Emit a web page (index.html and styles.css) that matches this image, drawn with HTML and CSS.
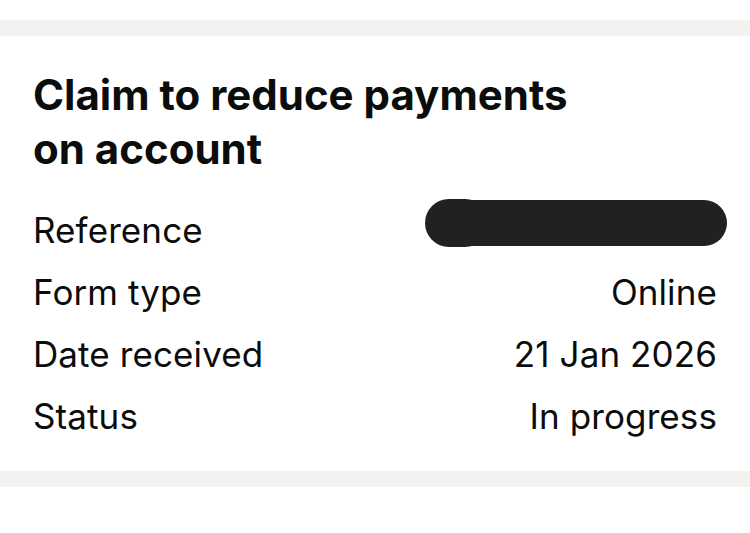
FILE: index.html
```html
<!DOCTYPE html>
<html lang="en">
<head>
<meta charset="utf-8">
<title>Claim to reduce payments on account</title>
<link rel="stylesheet" href="styles.css">
</head>
<body>
<div class="top-gap"></div>
<div class="band"></div>
<section class="card">
  <h1 class="title">Claim to reduce payments<br>on account</h1>
  <dl class="rows">
    <div class="row">
      <dt>Reference</dt>
      <dd><span class="redacted" aria-label="Redacted"></span></dd>
    </div>
    <div class="row">
      <dt>Form type</dt>
      <dd>Online</dd>
    </div>
    <div class="row">
      <dt>Date received</dt>
      <dd>21 Jan 2026</dd>
    </div>
    <div class="row">
      <dt>Status</dt>
      <dd>In progress</dd>
    </div>
  </dl>
</section>
<div class="band"></div>
</body>
</html>
```
FILE: styles.css
```css
html, body {
  margin: 0;
  padding: 0;
  background: #ffffff;
  color: #0b0c0c;
  font-family: Inter, "Noto Sans", "Liberation Sans", sans-serif;
}

.top-gap {
  height: 20px;
}

.band {
  height: 16px;
  background: #f3f2f1;
}

.card {
  padding: 32px 33px 24px 33px;
}

.title {
  margin: 0;
  font-size: 42px;
  font-weight: 700;
  line-height: 54px;
  letter-spacing: 0;
}

.rows {
  margin: 23px 0 0 0;
  display: flex;
  flex-direction: column;
}

.row {
  display: flex;
  justify-content: space-between;
  align-items: center;
  height: 62px;
  font-size: 35px;
  letter-spacing: 0.1px;
}

.row dt,
.row dd {
  margin: 0;
}

.redacted {
  position: relative;
  display: block;
  width: 300px;
  height: 46px;
  margin: 0 -10px 14px 0;
  border-radius: 23px;
  background: #212121;
}

.redacted::before {
  content: "";
  position: absolute;
  left: -2px;
  top: -1px;
  width: 64px;
  height: 48px;
  border-radius: 24px;
  background: #212121;
}
```
